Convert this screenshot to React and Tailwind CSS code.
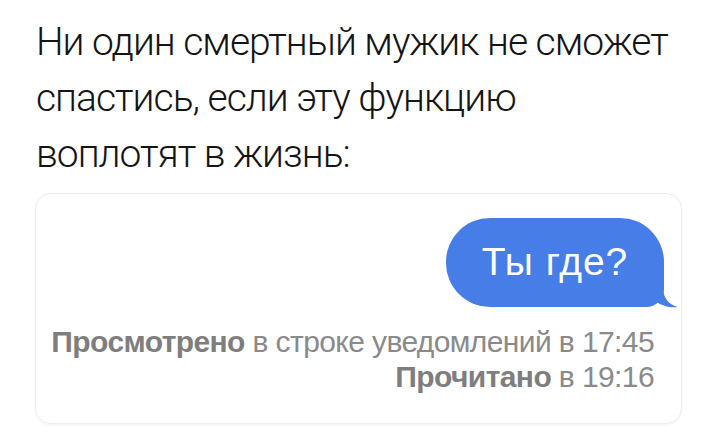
export default function App() {
  return (
    <div className="w-[720px] h-[447px] bg-white overflow-hidden">
      {/* Caption */}
      <p className="pl-[36px] pt-[14px] font-['Roboto',sans-serif] font-light text-[39px] leading-[56px] tracking-[-1px] text-[#151515]">
        Ни один смертный мужик не сможет
        <br />
        спастись, если эту функцию
        <br />
        воплотят в жизнь:
      </p>

      {/* Message card */}
      <div className="ml-[35px] mt-[11px] w-[647px] h-[231px] rounded-[16px] border border-[#ededed] shadow-[0_1px_3px_rgba(0,0,0,0.05)] flex flex-col items-end pt-[24px] pr-[17px]">
        <div className="relative w-[218px] h-[89px] rounded-[44px] rounded-br-[18px] bg-[#467de6] flex items-center justify-center">
          <span className="relative z-10 font-['Liberation_Sans',Arial,sans-serif] text-[39px] tracking-[1px] text-white">Ты где?</span>
          <svg className="absolute right-[-15px] bottom-[-2px]" width="46" height="44" viewBox="0 0 46 44">
            <path d="M30 0 L30 22 C30 33 36 40 45 42 C37 43 29 41 24 37 C20 39 14 40 0 40 L0 0 Z" fill="#467de6" />
          </svg>
        </div>
        <div className="mt-[17px] pr-[10px] text-right font-['Liberation_Sans',Arial,sans-serif] text-[30px] leading-[35px] tracking-[-0.6px] text-[#8a8a8a]">
          <div>
            <span className="font-bold text-[#7e7e7e]">Просмотрено</span> в строке уведомлений в 17:45
          </div>
          <div>
            <span className="font-bold text-[#7e7e7e]">Прочитано</span> в 19:16
          </div>
        </div>
      </div>
    </div>
  );
}
